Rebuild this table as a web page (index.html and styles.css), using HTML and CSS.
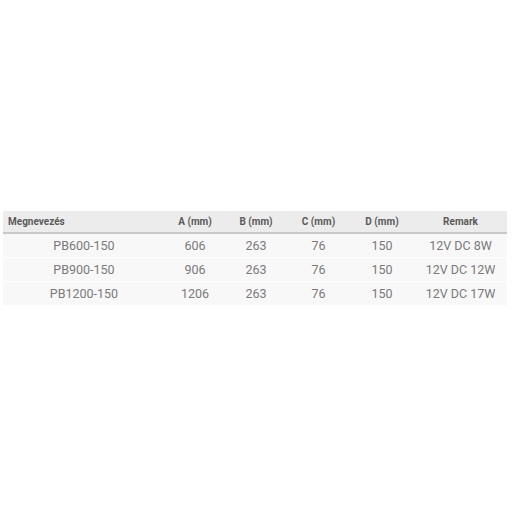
FILE: index.html
```html
<!DOCTYPE html>
<html>
<head>
<meta charset="utf-8">
<link rel="stylesheet" href="styles.css">
</head>
<body>
<div class="wrap">
<table class="spec">
  <colgroup>
    <col class="c1"><col class="c2"><col class="c3"><col class="c4"><col class="c5"><col class="c6">
  </colgroup>
  <thead>
    <tr><th class="left">Megnevezés</th><th>A (mm)</th><th>B (mm)</th><th>C (mm)</th><th>D (mm)</th><th>Remark</th></tr>
  </thead>
  <tbody>
    <tr><td>PB600-150</td><td>606</td><td>263</td><td>76</td><td>150</td><td>12V DC 8W</td></tr>
    <tr><td>PB900-150</td><td>906</td><td>263</td><td>76</td><td>150</td><td>12V DC 12W</td></tr>
    <tr><td>PB1200-150</td><td>1206</td><td>263</td><td>76</td><td>150</td><td>12V DC 17W</td></tr>
  </tbody>
</table>
</div>
</body>
</html>
```
FILE: styles.css
```css
html, body { margin: 0; padding: 0; background: #fff; }
body { font-family: Roboto, "Liberation Sans", sans-serif; }
.wrap { padding: 211px 5px 0 3px; }
.spec { width: 100%; border-collapse: collapse; table-layout: fixed; }
.c1 { width: 162px; }
.c2 { width: 60px; }
.c3 { width: 62px; }
.c4 { width: 63px; }
.c5 { width: 64px; }
.c6 { width: auto; }
.spec th {
  background: #ececec;
  color: #5a5a5a;
  font-size: 10px;
  font-weight: 700;
  height: 21px;
  padding: 0 5px;
  text-align: center;
  border-bottom: 2px solid #c9c9c9;
}
.spec th.left { text-align: left; }
.spec td {
  background: #f8f8f8;
  color: #7a7a7a;
  font-size: 12.5px;
  font-weight: 400;
  height: 23px;
  padding: 0;
  text-align: center;
  border-bottom: 1px solid #fff;
}
```
